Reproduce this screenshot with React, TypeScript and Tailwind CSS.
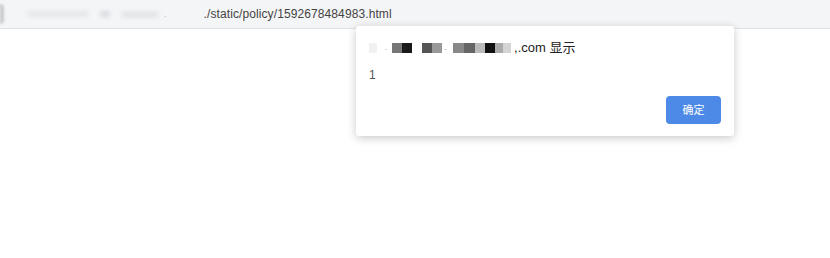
import React from "react";

const Blk = ({ w, c }: { w: number; c: string }) => (
  <span className="inline-block h-[10px] shrink-0" style={{ width: w, background: c }} />
);

export default function App() {
  return (
    <div className="relative w-[830px] h-[258px] bg-white overflow-hidden font-['Liberation_Sans','Noto_Sans_CJK_SC',sans-serif]">
      <div className="flex items-center h-[29px] bg-[#f4f5f6] border-b border-[#dfe1e4]">
        <div className="w-[4px] h-[20px] bg-[#c9cbce] rounded-r-sm blur-[1px]" />
        <div className="flex items-center gap-3 ml-6 blur-[2px]">
          <div className="w-[60px] h-[6px] bg-[#e4e7ea]" />
          <div className="w-[10px] h-[6px] bg-[#d9dde1]" />
          <div className="w-[36px] h-[5px] bg-[#dde1e5]" />
        </div>
        <span className="ml-[6px] text-[9px] text-[#bbb] leading-none">.</span>
        <span className="ml-[37px] text-[12px] text-[#444] tracking-[0.1px]">./static/policy/1592678484983.html</span>
      </div>

      <div className="absolute left-[356px] top-[26px] w-[378px] h-[110px] bg-white rounded-[3px] shadow-[0_2px_10px_rgba(0,0,0,0.22)] px-[13px] pt-[14px]">
        <div className="flex items-center h-[16px] text-[13px] text-[#222]">
          <Blk w={8} c="#f0f0f0" />
          <span className="ml-[8px] text-[#aaa] text-[9px]">.</span>
          <span className="ml-[4px] flex">
            <Blk w={10} c="#777" />
            <Blk w={10} c="#1a1a1a" />
          </span>
          <span className="ml-[10px] flex">
            <Blk w={10} c="#555" />
            <Blk w={10} c="#999" />
          </span>
          <span className="ml-[3px] text-[#888] text-[9px]">.</span>
          <span className="ml-[6px] flex">
            <Blk w={11} c="#888" />
            <Blk w={11} c="#666" />
            <Blk w={10} c="#bbb" />
            <Blk w={10} c="#111" />
            <Blk w={8} c="#aaa" />
            <Blk w={8} c="#d4d4d4" />
          </span>
          <span className="ml-[3px]">,.com 显示</span>
        </div>
        <div className="mt-[13px] text-[12px] text-[#555] leading-none">1</div>
        <div className="flex justify-end mt-[15px]">
          <button className="w-[55px] h-[28px] rounded-[4px] bg-[#4d89e6] text-white text-[11px]">确定</button>
        </div>
      </div>
    </div>
  );
}
